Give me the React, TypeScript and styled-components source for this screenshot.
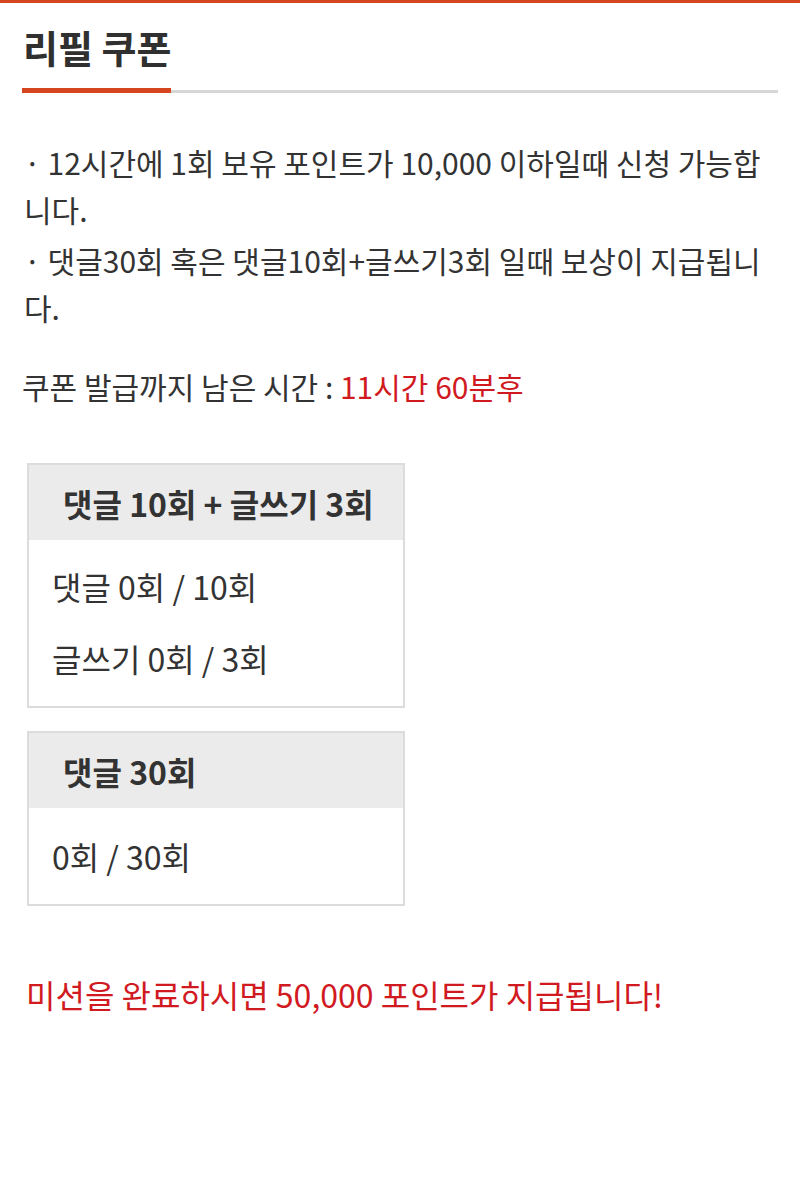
import React from "react";
import styled, { createGlobalStyle } from "styled-components";

const GlobalStyle = createGlobalStyle`
  html, body {
    margin: 0;
    padding: 0;
    background: #ffffff;
  }
  body {
    font-family: "Noto Sans CJK KR", "Noto Sans", sans-serif;
    color: #333;
  }
`;

const Page = styled.div`
  border-top: 3px solid #d5451f;
  padding: 0 22px 40px 22px;
`;

const TitleWrap = styled.div`
  display: flex;
  align-items: flex-end;
  padding-top: 17px;
`;

const Title = styled.h2`
  flex: 0 0 148px;
  margin: 0;
  padding: 0 0 14px 1px;
  font-size: 38px;
  font-weight: 700;
  color: #303030;
  line-height: 54px;
  white-space: nowrap;
  border-bottom: 5px solid #d5451f;
  box-sizing: border-box;
`;

const TitleRule = styled.div`
  flex: 1;
  height: 3px;
  background: #d6d6d6;
`;

const Notes = styled.div`
  margin-top: 46px;
  font-size: 30px;
  line-height: 47px;
  color: #333;
`;

const Note = styled.p`
  margin: 0 0 4px 0;
  word-break: break-all;
  padding-left: 2px;
`;

const Timer = styled.p`
  margin: 31px 0 0 0;
  font-size: 30px;
  line-height: 48px;
  color: #333;
`;

const Red = styled.span`
  color: #d11a1f;
`;

const Mission = styled.div<{ $top: number }>`
  width: 374px;
  margin: ${(p) => p.$top}px 0 0 5px;
  border: 2px solid #dcdcdc;
`;

const MissionHead = styled.div`
  background: #ebebeb;
  height: 75px;
  display: flex;
  align-items: center;
  padding-left: 34px;
  font-size: 32px;
  font-weight: 700;
  color: #333;
`;

const MissionBody = styled.div<{ $pad: number }>`
  padding: ${(p) => p.$pad}px 0 12px 23px;
  display: flex;
  flex-direction: column;
`;

const MissionRow = styled.div`
  font-size: 32px;
  line-height: 72px;
  color: #333;
`;

const Reward = styled.p`
  margin: 64px 0 0 4px;
  font-size: 32px;
  line-height: 48px;
  color: #d11a1f;
`;

export default function App() {
  return (
    <>
      <GlobalStyle />
      <Page>
        <TitleWrap>
          <Title>리필 쿠폰</Title>
          <TitleRule />
        </TitleWrap>
        <Notes>
          <Note>· 12시간에 1회 보유 포인트가 10,000 이하일때 신청 가능합니다.</Note>
          <Note>· 댓글30회 혹은 댓글10회+글쓰기3회 일때 보상이 지급됩니다.</Note>
        </Notes>
        <Timer>
          쿠폰 발급까지 남은 시간 : <Red>11시간 60분후</Red>
        </Timer>
        <Mission $top={53}>
          <MissionHead>댓글 10회 + 글쓰기 3회</MissionHead>
          <MissionBody $pad={10}>
            <MissionRow>댓글 0회 / 10회</MissionRow>
            <MissionRow>글쓰기 0회 / 3회</MissionRow>
          </MissionBody>
        </Mission>
        <Mission $top={23}>
          <MissionHead>댓글 30회</MissionHead>
          <MissionBody $pad={12}>
            <MissionRow>0회 / 30회</MissionRow>
          </MissionBody>
        </Mission>
        <Reward>미션을 완료하시면 50,000 포인트가 지급됩니다!</Reward>
      </Page>
    </>
  );
}
